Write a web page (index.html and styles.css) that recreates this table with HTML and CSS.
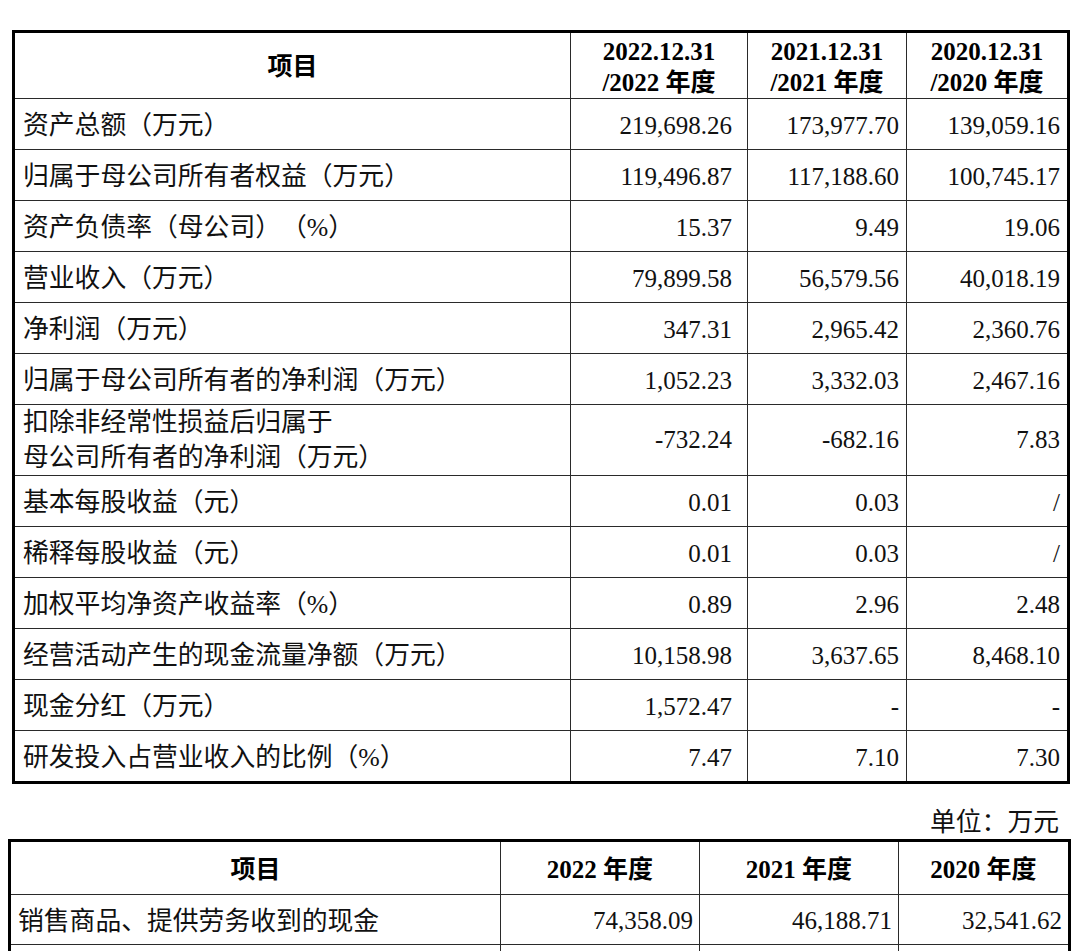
FILE: index.html
```html
<!DOCTYPE html>
<html lang="zh-CN">
<head>
<meta charset="utf-8">
<title>主要财务数据</title>
<link rel="stylesheet" href="styles.css">
</head>
<body>
<div class="page">
  <table class="fin t1">
    <colgroup>
      <col class="c1a"><col class="c2a"><col class="c3a"><col class="c4a">
    </colgroup>
    <thead>
      <tr class="hrow">
        <th>项目</th>
        <th>2022.12.31<br>/2022 年度</th>
        <th>2021.12.31<br>/2021 年度</th>
        <th>2020.12.31<br>/2020 年度</th>
      </tr>
    </thead>
    <tbody>
      <tr><td class="lbl">资产总额（万元）</td><td class="n n1">219,698.26</td><td class="n">173,977.70</td><td class="n">139,059.16</td></tr>
      <tr><td class="lbl">归属于母公司所有者权益（万元）</td><td class="n n1">119,496.87</td><td class="n">117,188.60</td><td class="n">100,745.17</td></tr>
      <tr><td class="lbl">资产负债率（母公司）（%）</td><td class="n n1">15.37</td><td class="n">9.49</td><td class="n">19.06</td></tr>
      <tr><td class="lbl">营业收入（万元）</td><td class="n n1">79,899.58</td><td class="n">56,579.56</td><td class="n">40,018.19</td></tr>
      <tr><td class="lbl">净利润（万元）</td><td class="n n1">347.31</td><td class="n">2,965.42</td><td class="n">2,360.76</td></tr>
      <tr><td class="lbl">归属于母公司所有者的净利润（万元）</td><td class="n n1">1,052.23</td><td class="n">3,332.03</td><td class="n">2,467.16</td></tr>
      <tr class="tall"><td class="lbl">扣除非经常性损益后归属于<br>母公司所有者的净利润（万元）</td><td class="n n1">-732.24</td><td class="n">-682.16</td><td class="n">7.83</td></tr>
      <tr><td class="lbl">基本每股收益（元）</td><td class="n n1">0.01</td><td class="n">0.03</td><td class="n">/</td></tr>
      <tr><td class="lbl">稀释每股收益（元）</td><td class="n n1">0.01</td><td class="n">0.03</td><td class="n">/</td></tr>
      <tr><td class="lbl">加权平均净资产收益率（%）</td><td class="n n1">0.89</td><td class="n">2.96</td><td class="n">2.48</td></tr>
      <tr><td class="lbl">经营活动产生的现金流量净额（万元）</td><td class="n n1">10,158.98</td><td class="n">3,637.65</td><td class="n">8,468.10</td></tr>
      <tr><td class="lbl">现金分红（万元）</td><td class="n n1">1,572.47</td><td class="n">-</td><td class="n">-</td></tr>
      <tr class="last"><td class="lbl">研发投入占营业收入的比例（%）</td><td class="n n1">7.47</td><td class="n">7.10</td><td class="n">7.30</td></tr>
    </tbody>
  </table>

  <div class="unit">单位：万元</div>

  <table class="fin t2">
    <colgroup>
      <col class="c1b"><col class="c2b"><col class="c3b"><col class="c4b">
    </colgroup>
    <thead>
      <tr class="hrow2">
        <th>项目</th>
        <th>2022 年度</th>
        <th>2021 年度</th>
        <th>2020 年度</th>
      </tr>
    </thead>
    <tbody>
      <tr class="row2"><td class="lbl lbl2">销售商品、提供劳务收到的现金</td><td class="n">74,358.09</td><td class="n">46,188.71</td><td class="n">32,541.62</td></tr>
      <tr class="row2 last"><td class="lbl lbl2">&nbsp;</td><td class="n">&nbsp;</td><td class="n">&nbsp;</td><td class="n">&nbsp;</td></tr>
    </tbody>
  </table>
</div>
</body>
</html>
```

FILE: styles.css
```css
html, body {
  margin: 0;
  padding: 0;
  background: #ffffff;
}

body {
  font-family: "Liberation Serif", "Noto Sans CJK SC", serif;
  font-size: 25px;
  color: #111111;
  text-spacing-trim: space-all;
}

.page {
  padding-top: 30px;
}

.fin {
  border-collapse: separate;
  border-spacing: 0;
  table-layout: fixed;
  border: 3px solid #000000;
}

.fin th,
.fin td {
  padding: 0;
  border-right: 1px solid #2a2a2a;
  border-bottom: 1px solid #2a2a2a;
  vertical-align: middle;
  white-space: nowrap;
}

.fin th:last-child,
.fin td:last-child {
  border-right: none;
}

.fin tr.last td {
  border-bottom: none;
}

.fin th {
  font-weight: bold;
  text-align: center;
  line-height: 31px;
  color: #000000;
  padding-top: 2px;
}

.fin tbody td {
  padding-top: 3px;
}

.fin tbody tr.tall td {
  padding-top: 0;
}

.t1 {
  width: 1058px;
  margin-left: 12px;
}

.c1a { width: 556px; }
.c2a { width: 177px; }
.c3a { width: 159px; }
.c4a { width: 160px; }

.hrow { height: 66px; }
.t1 tbody tr { height: 51px; }
.t1 tbody tr.tall { height: 70px; }
.t1 tbody tr.last { height: 50px; }

.lbl {
  text-align: left;
  padding-left: 8px !important;
  line-height: 35px;
  font-size: 25.8px;
}

.n {
  text-align: right;
  padding-right: 7px !important;
  line-height: 30px;
}

.t1 .n1 {
  padding-right: 15px !important;
}

.unit {
  width: 1059px;
  text-align: right;
  margin-top: 24px;
  height: 30px;
  line-height: 30px;
  margin-bottom: 1px;
  font-size: 25.8px;
}

.t2 {
  width: 1063px;
  margin-left: 8px;
}

.c1b { width: 490px; }
.c2b { width: 199px; }
.c3b { width: 199px; }
.c4b { width: 169px; }

.hrow2 { height: 53px; }
.t2 tbody tr.row2 { height: 50px; }

.lbl2 {
  padding-left: 7px !important;
}

.t2 .n {
  padding-right: 6px !important;
}
```
